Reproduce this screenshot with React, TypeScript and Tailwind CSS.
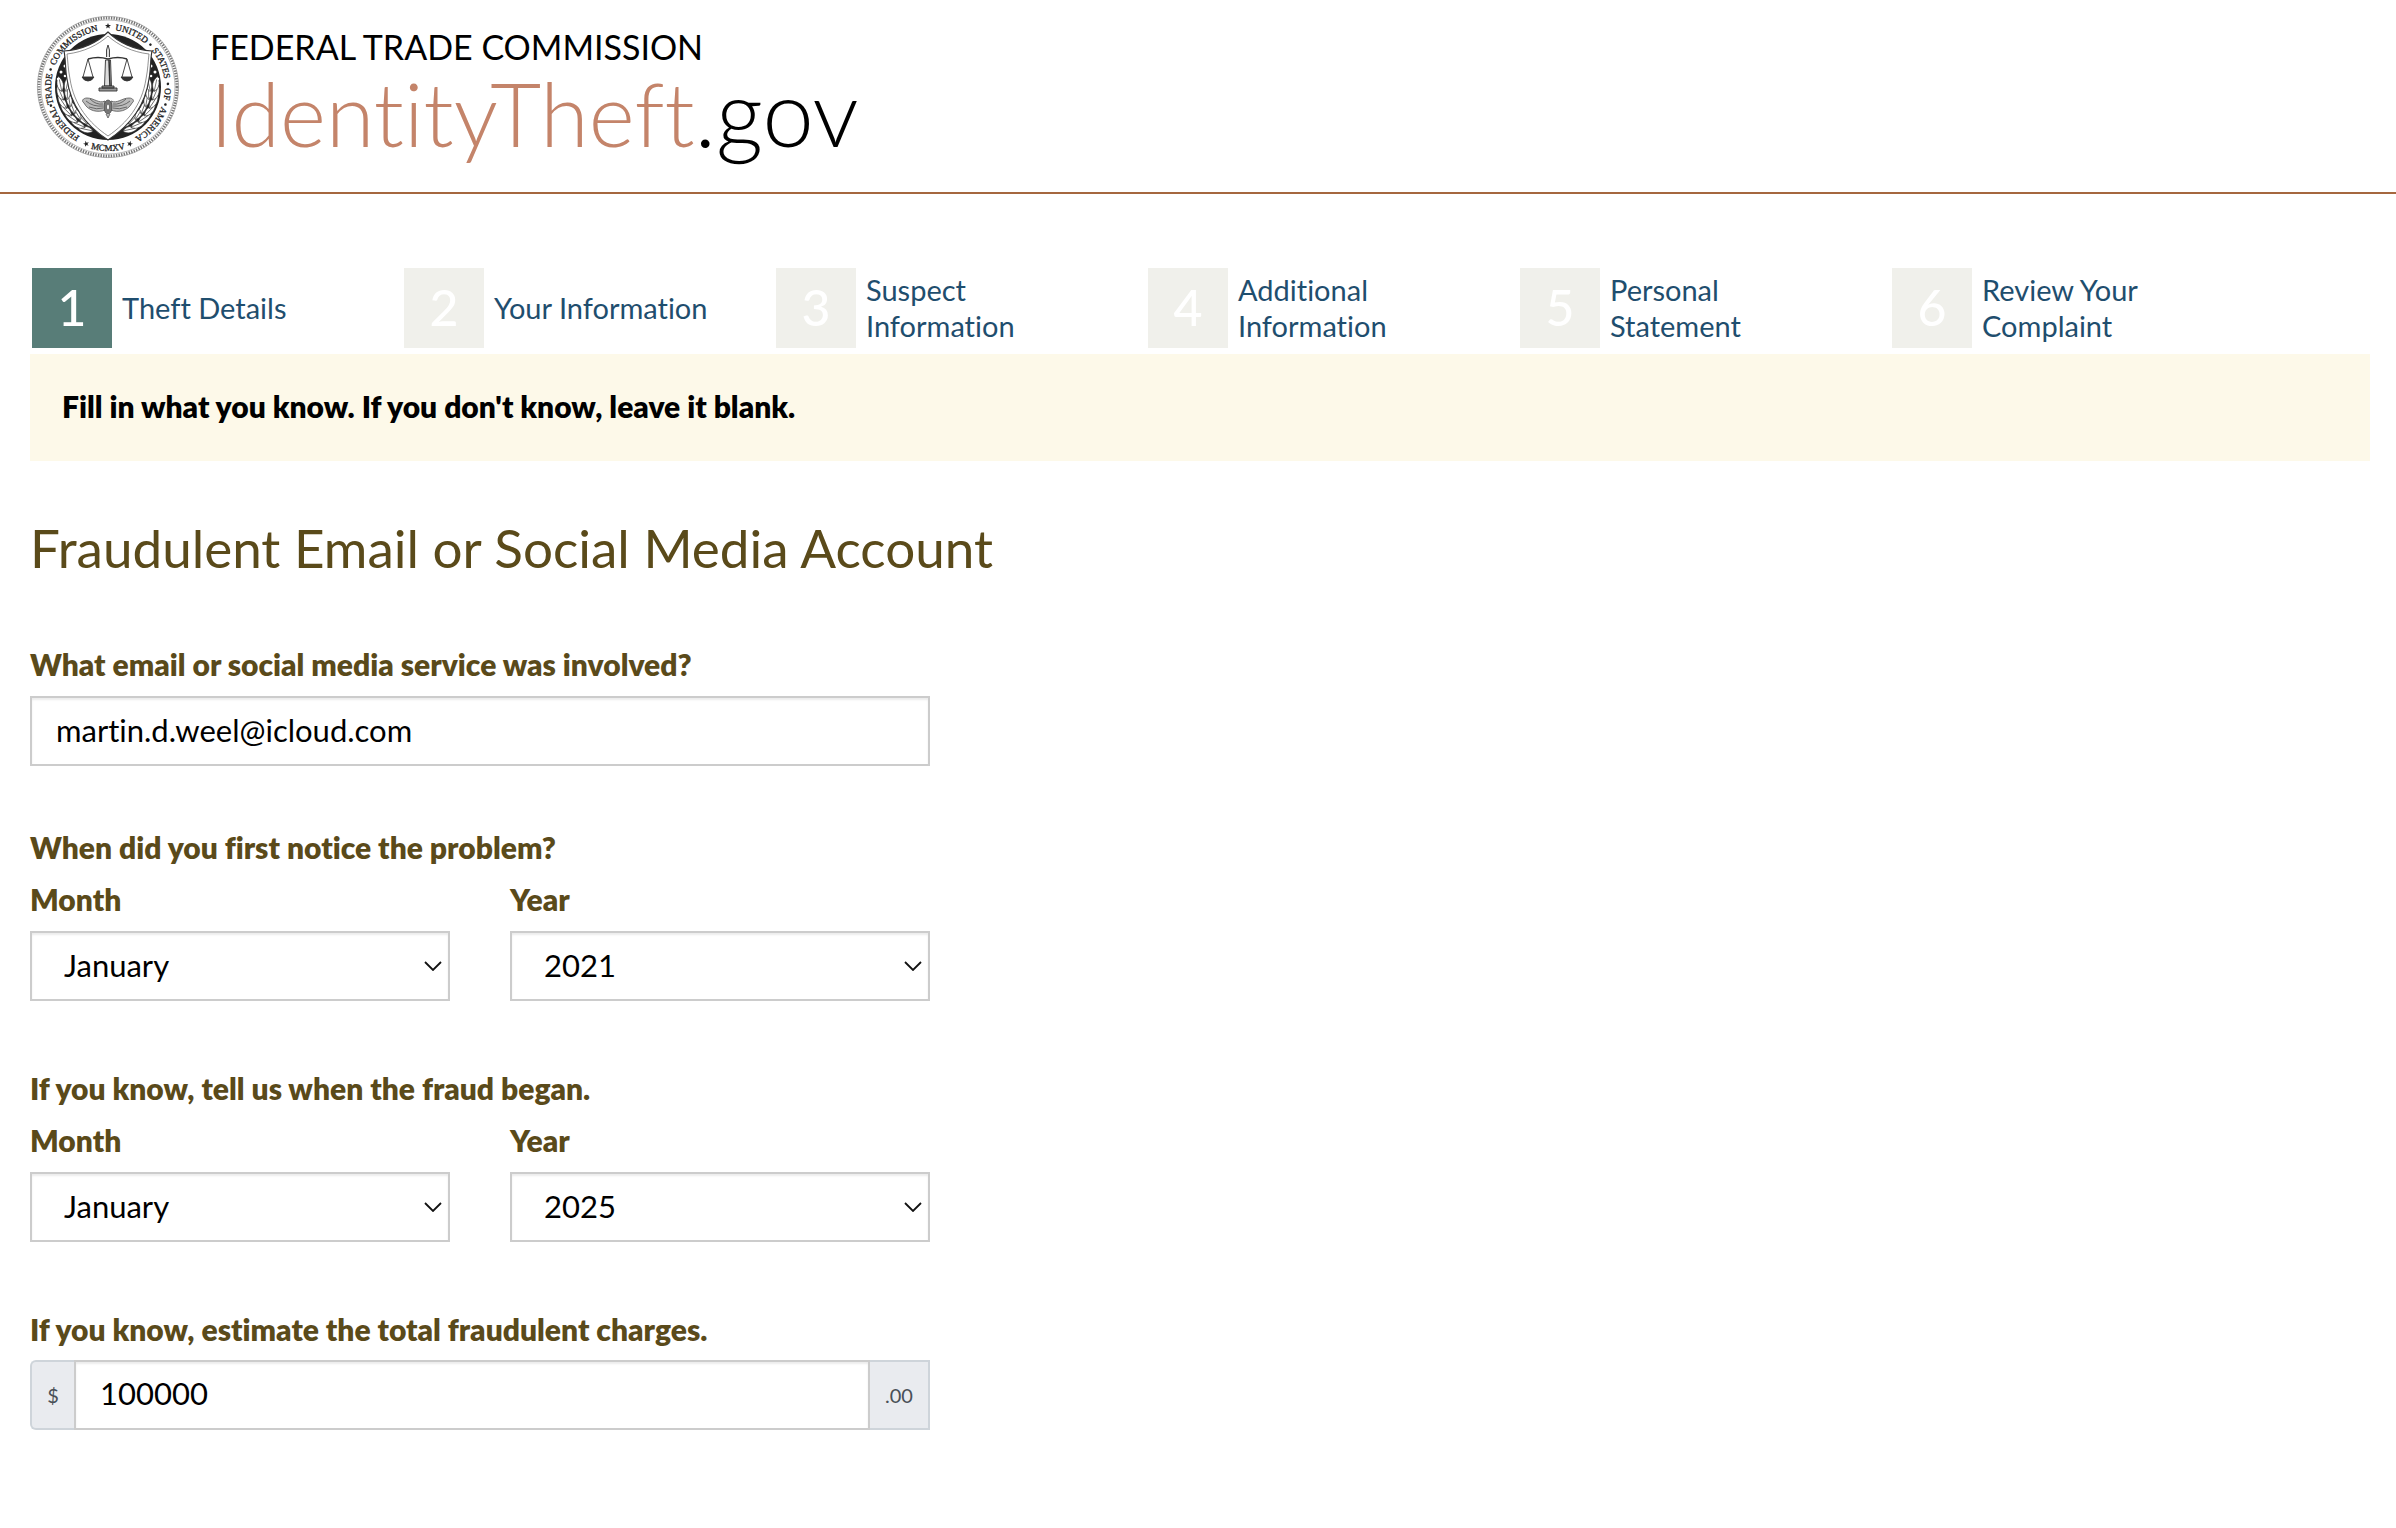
import { useState } from 'react';

const steps = [
  'Theft Details',
  'Your Information',
  'Suspect Information',
  'Additional Information',
  'Personal Statement',
  'Review Your Complaint',
];

const months = [
  'January', 'February', 'March', 'April', 'May', 'June', 'July',
  'August', 'September', 'October', 'November', 'December',
];

const years = ['2019', '2020', '2021', '2022', '2023', '2024', '2025'];

const sealWords = [
  { text: 'FEDERAL', angle: 230 },
  { text: 'TRADE', angle: 268 },
  { text: 'COMMISSION', angle: 321 },
  { text: 'UNITED', angle: 24 },
  { text: 'STATES', angle: 66 },
  { text: 'OF', angle: 97 },
  { text: 'AMERICA', angle: 131 },
];

const sealDots = [252, 287, 45, 87, 107];
const sealStars = [0, 159, 201];

const leaves = [206, 217, 228, 239, 250, 261, 272];

function Laurel() {
  return (
    <g>
      {leaves.map((angle) => (
        <g key={angle} transform={`rotate(${angle}) translate(0 -44)`} fill="#fff" stroke="#222" strokeWidth="0.6">
          <path d="M-6 -2C-3 -8 4 -8 9 -6C5 -1 0 1 -6 -2Z" />
          <path d="M-6 2C-2 -1 5 0 9 4C4 7 -2 7 -6 2Z" />
          <path d="M-6 -2L6 -5M-5 2L6 4" fill="none" />
        </g>
      ))}
      <g fill="#fff">
        <circle cx="-43" cy="-21" r="1.5" />
        <circle cx="-47" cy="-15" r="1.5" />
        <circle cx="-43" cy="-11" r="1.3" />
        <circle cx="-50" cy="-8" r="1.2" />
        <circle cx="-33" cy="22" r="1.2" />
      </g>
    </g>
  );
}

function Seal() {
  return (
    <svg viewBox="-72 -72 144 144" className="size-36 shrink-0" role="img" aria-label="Federal Trade Commission seal">
      <defs>
        <path id="ring" d="M0 57A57 57 0 0 1 0 -57A57 57 0 0 1 0 57" />
        <path id="ring-bottom" d="M-64 0A64 64 0 0 0 64 0" />
      </defs>
      <circle r="69" fill="none" stroke="#777" strokeWidth="3" strokeDasharray="1.4 1.2" />
      <circle r="70.6" fill="none" stroke="#888" strokeWidth="0.6" />
      <circle r="67" fill="none" stroke="#888" strokeWidth="0.6" />
      <circle r="53" fill="#222" />
      <Laurel />
      <g transform="scale(-1 1)">
        <Laurel />
      </g>
      <g fontFamily="Liberation Serif, serif" fontSize="9" fill="#222" stroke="#222" strokeWidth="0.3" textAnchor="middle">
        {sealWords.map(({ text, angle }) => (
          <text key={text}>
            <textPath href="#ring" startOffset={`${(((angle + 180) % 360) / 360) * 100}%`}>
              {text}
            </textPath>
          </text>
        ))}
        <text>
          <textPath href="#ring-bottom" startOffset="50%">MCMXV</textPath>
        </text>
      </g>
      <g fill="#222">
        {sealDots.map((angle) => (
          <circle key={angle} cy="-60" r="1.3" transform={`rotate(${angle})`} />
        ))}
        {sealStars.map((angle) => (
          <path
            key={angle}
            d="M0 -3L0.8 -0.9L3 -0.9L1.2 0.4L1.9 2.6L0 1.3L-1.9 2.6L-1.2 0.4L-3 -0.9L-0.8 -0.9Z"
            transform={`rotate(${angle}) translate(0 -61)`}
          />
        ))}
      </g>
      <path
        d="M0 -55C-10 -45 -26 -37 -44 -36C-42 -26 -43 -18 -41 -8C-37 20 -20 40 0 53C20 40 37 20 41 -8C43 -18 42 -26 44 -36C26 -37 10 -45 0 -55Z"
        fill="#fff"
        stroke="#333"
        strokeWidth="1.2"
      />
      <path
        d="M0 -51C-10 -42 -24 -35 -41 -33C-40 -25 -40 -18 -38 -8C-34 18 -19 36 0 49C19 36 34 18 38 -8C40 -18 40 -25 41 -33C24 -35 10 -42 0 -51Z"
        fill="none"
        stroke="#777"
        strokeWidth="0.8"
      />
      {/* scales */}
      <g fill="none" stroke="#333" strokeWidth="0.9">
        <path d="M-20 -28Q-10 -31 0 -28Q10 -31 19 -28" strokeWidth="1.4" />
        <path d="M-20 -28L-25 -10M-20 -28L-15 -10M19 -28L14 -10M19 -28L24 -10" />
        <path d="M-26 -10H-14Q-16 -6 -20 -6Q-24 -6 -26 -10ZM13 -10H25Q23 -6 19 -6Q15 -6 13 -10Z" fill="#333" />
        <path d="M-1.5 -30V-37L0 -42L1.5 -37V-30M-2.5 -27H2.5L3.5 -1H-3.5Z" fill="#ddd" />
        <path d="M1 -27L2 -1" strokeWidth="1.6" />
        <path d="M-6 -1H6V1H-6ZM-9 1H9V4H-9Z" fill="#999" />
      </g>
      {/* winged wheel */}
      <g stroke="#444" strokeWidth="0.7" fill="#bbb">
        <path d="M-3 14C-9 17 -14 11 -21 11C-25 11 -27 14 -24 16C-20 24 -10 26 -3 23Z" />
        <path d="M3 14C9 17 14 11 21 11C25 11 27 14 24 16C20 24 10 26 3 23Z" />
        <path d="M-22 14Q-15 20 -5 19M-18 12Q-12 18 -5 17M-19 20Q-11 23 -5 21M22 14Q15 20 5 19M18 12Q12 18 5 17M19 20Q11 23 5 21" fill="none" />
        <ellipse cy="20" rx="4" ry="7" fill="#777" />
        <ellipse cy="20" rx="1.5" ry="3" fill="#fff" />
        <path d="M-2 27L0 31L2 27" />
      </g>
    </svg>
  );
}

interface SelectFieldProps {
  id: string;
  label: string;
  options: string[];
  initial: string;
}

function SelectField({ id, label, options, initial }: SelectFieldProps) {
  const [value, setValue] = useState(initial);

  return (
    <div className="flex-1">
      <label htmlFor={id} className="block text-[30px] leading-9 font-extrabold text-[#5a4a1a]">
        {label}
      </label>
      <div className="relative mt-3.5">
        <select
          id={id}
          value={value}
          onChange={(e) => setValue(e.target.value)}
          className="block h-[70px] w-full appearance-none border-2 border-[#ccc] bg-white pr-12 pb-0.5 pl-8 text-[31px] text-black shadow-[inset_0_2px_2px_rgba(0,0,0,0.08)]"
        >
          {options.map((option) => (
            <option key={option}>{option}</option>
          ))}
        </select>
        <svg
          viewBox="0 0 18 10"
          className="pointer-events-none absolute top-[30px] right-2 h-2.5 w-[18px]"
          fill="none"
          stroke="#111"
          strokeWidth="1.8"
        >
          <path d="M1 1L9 9L17 1" />
        </svg>
      </div>
    </div>
  );
}

interface DateFieldsProps {
  id: string;
  legend: string;
  year: string;
}

function DateFields({ id, legend, year }: DateFieldsProps) {
  return (
    <fieldset>
      <legend className="mb-4 text-[30px] leading-9 font-extrabold text-[#5a4a1a]">{legend}</legend>
      <div className="flex gap-[60px]">
        <SelectField id={`${id}-month`} label="Month" options={months} initial="January" />
        <SelectField id={`${id}-year`} label="Year" options={years} initial={year} />
      </div>
    </fieldset>
  );
}

export default function App() {
  const [service, setService] = useState('martin.d.weel@icloud.com');
  const [amount, setAmount] = useState('100000');

  return (
    <div className="min-h-screen bg-white font-['Lato',sans-serif] text-[29px] leading-9 text-black [font-variant-ligatures:none]">
      <header className="flex items-start border-b-2 border-[#a5673f] px-9 pt-[15px] pb-[33px]">
        <Seal />
        <div className="pl-[30px]">
          <div className="pt-3 text-[34px] leading-10">FEDERAL TRADE COMMISSION</div>
          <div className="flex items-baseline text-[88px] leading-[90px] font-light">
            <span className="text-[#c4846a]">IdentityTheft</span>
            <span className="text-[92px]">.gov</span>
          </div>
        </div>
      </header>

      <main className="pt-[74px] pr-[26px] pb-24 pl-[30px]">
        <ol className="flex flex-wrap pl-0.5">
          {steps.map((step, index) => (
            <li key={step} className="w-[372px]">
              <a href="#" className="flex items-center gap-2.5 text-[#1f4e6e]">
                <span
                  className={`flex size-20 shrink-0 items-center justify-center pb-0.5 text-[50px] font-medium text-white ${
                    index === 0 ? 'bg-[#587d78]' : 'bg-[#f0f0eb]'
                  }`}
                >
                  {index + 1}
                </span>
                <span className="max-w-[220px]">{step}</span>
              </a>
            </li>
          ))}
        </ol>

        <div className="mt-1.5 bg-[#fdf9e9] px-8 pt-[34px] pb-[37px] text-[30px] leading-9 font-extrabold">
          Fill in what you know. If you don't know, leave it blank.
        </div>

        <h1 className="mt-[57px] text-[53px] leading-[60px] text-[#5a4a1a]">
          Fraudulent Email or Social Media Account
        </h1>

        <form className="mt-[68px] max-w-[900px]">
          <label htmlFor="service" className="block text-[30px] leading-9 font-extrabold text-[#5a4a1a]">
            What email or social media service was involved?
          </label>
          <input
            id="service"
            type="text"
            value={service}
            onChange={(e) => setService(e.target.value)}
            className="mt-3.5 mb-[63px] block h-[70px] w-full border-2 border-[#ccc] px-6 pb-0.5 text-[31px] shadow-[inset_0_2px_2px_rgba(0,0,0,0.08)]"
          />

          <div className="flex flex-col gap-[69px]">
            <DateFields id="noticed" legend="When did you first notice the problem?" year="2021" />
            <DateFields id="began" legend="If you know, tell us when the fraud began." year="2025" />

            <div>
              <label htmlFor="amount" className="block text-[30px] leading-9 font-extrabold text-[#5a4a1a]">
                If you know, estimate the total fraudulent charges.
              </label>
              <div className="mt-[13px] flex h-[70px] text-xl text-[#495057]">
                <span className="flex w-11 items-center justify-center rounded-l-md border-2 border-r-0 border-[#ced4da] bg-[#e9ebef]">$</span>
                <input
                  id="amount"
                  type="text"
                  value={amount}
                  onChange={(e) => setAmount(e.target.value)}
                  className="min-w-0 flex-1 border-2 border-[#ccc] px-6 pb-0.5 text-[31px] text-black shadow-[inset_0_2px_2px_rgba(0,0,0,0.08)]"
                />
                <span className="flex w-[60px] items-center justify-center border-2 border-l-0 border-[#ced4da] bg-[#e9ebef]">.00</span>
              </div>
            </div>
          </div>
        </form>
      </main>
    </div>
  );
}
